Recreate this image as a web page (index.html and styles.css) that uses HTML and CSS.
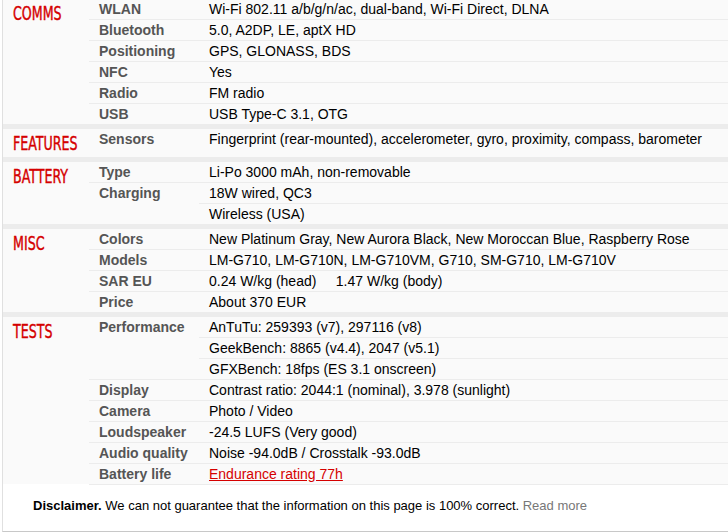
FILE: index.html
```html
<!DOCTYPE html>
<html>
<head>
<meta charset="utf-8">
<link rel="stylesheet" href="styles.css">
</head>
<body>
<div class="specs">
  <div class="section">
    <div class="cat"><span>Comms</span></div>
    <div class="rows">
      <div class="row"><div class="ttl">WLAN</div><div class="vals"><div class="val">Wi-Fi 802.11 a/b/g/n/ac, dual-band, Wi-Fi Direct, DLNA</div></div></div>
      <div class="row"><div class="ttl">Bluetooth</div><div class="vals"><div class="val">5.0, A2DP, LE, aptX HD</div></div></div>
      <div class="row"><div class="ttl">Positioning</div><div class="vals"><div class="val">GPS, GLONASS, BDS</div></div></div>
      <div class="row"><div class="ttl">NFC</div><div class="vals"><div class="val">Yes</div></div></div>
      <div class="row"><div class="ttl">Radio</div><div class="vals"><div class="val">FM radio</div></div></div>
      <div class="row"><div class="ttl">USB</div><div class="vals"><div class="val">USB Type-C 3.1, OTG</div></div></div>
    </div>
  </div>
  <div class="section">
    <div class="cat"><span>Features</span></div>
    <div class="rows">
      <div class="row"><div class="ttl">Sensors</div><div class="vals"><div class="val">Fingerprint (rear-mounted), accelerometer, gyro, proximity, compass, barometer</div></div></div>
    </div>
  </div>
  <div class="section">
    <div class="cat"><span>Battery</span></div>
    <div class="rows">
      <div class="row"><div class="ttl">Type</div><div class="vals"><div class="val">Li-Po 3000 mAh, non-removable</div></div></div>
      <div class="row"><div class="ttl">Charging</div><div class="vals"><div class="val">18W wired, QC3</div><div class="val">Wireless (USA)</div></div></div>
    </div>
  </div>
  <div class="section">
    <div class="cat"><span>Misc</span></div>
    <div class="rows">
      <div class="row"><div class="ttl">Colors</div><div class="vals"><div class="val">New Platinum Gray, New Aurora Black, New Moroccan Blue, Raspberry Rose</div></div></div>
      <div class="row"><div class="ttl">Models</div><div class="vals"><div class="val">LM-G710, LM-G710N, LM-G710VM, G710, SM-G710, LM-G710V</div></div></div>
      <div class="row"><div class="ttl">SAR EU</div><div class="vals"><div class="val">0.24 W/kg (head) &nbsp;&nbsp;&nbsp; 1.47 W/kg (body)</div></div></div>
      <div class="row"><div class="ttl">Price</div><div class="vals"><div class="val">About 370 EUR</div></div></div>
    </div>
  </div>
  <div class="section last">
    <div class="cat"><span>Tests</span></div>
    <div class="rows">
      <div class="row"><div class="ttl">Performance</div><div class="vals"><div class="val">AnTuTu: 259393 (v7), 297116 (v8)</div><div class="val">GeekBench: 8865 (v4.4), 2047 (v5.1)</div><div class="val">GFXBench: 18fps (ES 3.1 onscreen)</div></div></div>
      <div class="row"><div class="ttl">Display</div><div class="vals"><div class="val">Contrast ratio: 2044:1 (nominal), 3.978 (sunlight)</div></div></div>
      <div class="row"><div class="ttl">Camera</div><div class="vals"><div class="val">Photo / Video</div></div></div>
      <div class="row"><div class="ttl">Loudspeaker</div><div class="vals"><div class="val">-24.5 LUFS (Very good)</div></div></div>
      <div class="row"><div class="ttl">Audio quality</div><div class="vals"><div class="val">Noise -94.0dB / Crosstalk -93.0dB</div></div></div>
      <div class="row"><div class="ttl">Battery life</div><div class="vals"><div class="val"><a class="link" href="#">Endurance rating 77h</a></div></div></div>
    </div>
  </div>
  <p class="note"><b>Disclaimer.</b> We can not guarantee that the information on this page is 100% correct. <a class="more" href="#">Read more</a></p>
</div>
</body>
</html>
```

FILE: styles.css
```css
html, body {
  margin: 0;
  padding: 0;
  background: #fff;
}

body {
  font-family: "Liberation Sans", Arial, sans-serif;
  overflow: hidden;
}

.specs {
  margin: -1px 0 0 2px;
  border-left: 1px solid #e0e0e0;
  border-bottom: 1px solid #c8c8c8;
}

.section {
  display: flex;
  background: #fafafa;
  border-bottom: 5px solid #ececec;
}

.section.last {
  border-bottom: 0;
  background: #fff;
}

.cat {
  width: 86px;
  flex: none;
  box-sizing: border-box;
  padding: 5px 0 5px 10px;
  font-family: "Liberation Sans Narrow", "Arial Narrow", "DejaVu Sans Condensed", sans-serif;
  font-size: 19px;
  line-height: 18px;
  color: #d50000;
  -webkit-text-stroke: 0.4px #d50000;
  text-transform: uppercase;
  white-space: nowrap;
}

.cat span {
  display: inline-block;
  transform: scaleX(0.74);
  transform-origin: left center;
}

.last .cat {
  background: #fafafa;
  margin-bottom: 1px;
}

.rows {
  flex: 1;
}

.last .rows {
  background: #fafafa;
}

.row {
  display: flex;
  border-bottom: 1px solid #ececec;
}

.section .row:last-child {
  border-bottom: 0;
}

.last .row:last-child {
  border-bottom: 1px solid #ececec;
}

.ttl {
  width: 110px;
  flex: none;
  box-sizing: border-box;
  padding-left: 10px;
  font-size: 14px;
  line-height: 20px;
  font-weight: bold;
  color: #555;
  white-space: nowrap;
}

.vals {
  flex: 1;
}

.val {
  padding-left: 10px;
  font-size: 14px;
  line-height: 20px;
  color: #000;
  white-space: nowrap;
  border-bottom: 1px solid #ececec;
}

.val:last-child {
  border-bottom: 0;
}

.link {
  color: #d50000;
  text-decoration: underline;
}

.note {
  margin: 0;
  padding: 12px 30px 16px;
  font-size: 13px;
  line-height: 18px;
  color: #000;
  background: #fff;
}

.note b {
  font-weight: bold;
}

.more {
  color: #777;
  text-decoration: none;
}
```
